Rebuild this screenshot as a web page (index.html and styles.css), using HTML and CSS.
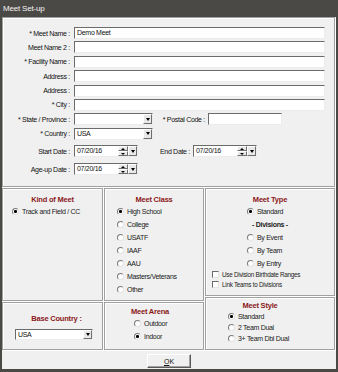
FILE: index.html
```html
<!DOCTYPE html>
<html lang="en">

<head>
  <meta charset="UTF-8" />
  <title>Meet Set-up</title>
  <link rel="stylesheet" href="styles.css">
</head>

<body>
  <div class="window">
    <div class="titlebar">Meet Set-up</div>

    <div class="client">
      <!-- general meet info -->
      <div class="panel setup">
        <div class="row">
          <span class="lbl">* Meet Name :</span>
          <span class="field wide">Demo Meet</span>
        </div>
        <div class="row">
          <span class="lbl">Meet Name 2 :</span>
          <span class="field wide"></span>
        </div>
        <div class="row">
          <span class="lbl">* Facility Name :</span>
          <span class="field wide"></span>
        </div>
        <div class="row">
          <span class="lbl">Address :</span>
          <span class="field wide"></span>
        </div>
        <div class="row">
          <span class="lbl">Address :</span>
          <span class="field wide"></span>
        </div>
        <div class="row">
          <span class="lbl">* City :</span>
          <span class="field wide"></span>
        </div>
        <div class="row">
          <span class="lbl">* State / Province :</span>
          <span class="field sel"><span class="val"></span><span class="btn drop"><i class="down"></i></span></span>
          <span class="lbl postal-lbl">* Postal Code :</span>
          <span class="field postal"></span>
        </div>
        <div class="row">
          <span class="lbl">* Country :</span>
          <span class="field sel"><span class="val">USA</span><span class="btn drop"><i class="down"></i></span></span>
        </div>
        <div class="row date-row">
          <span class="lbl">Start Date :</span>
          <span class="field date">
            <span class="val">07/20/16</span>
            <span class="spin"><span class="btn"><i class="up"></i></span><span class="btn"><i class="down"></i></span></span>
            <span class="btn drop"><i class="down"></i></span>
          </span>
          <span class="lbl postal-lbl">End Date :</span>
          <span class="field date">
            <span class="val">07/20/16</span>
            <span class="spin"><span class="btn"><i class="up"></i></span><span class="btn"><i class="down"></i></span></span>
            <span class="btn drop"><i class="down"></i></span>
          </span>
        </div>
        <div class="row date-row">
          <span class="lbl">Age-up Date :</span>
          <span class="field date">
            <span class="val">07/20/16</span>
            <span class="spin"><span class="btn"><i class="up"></i></span><span class="btn"><i class="down"></i></span></span>
            <span class="btn drop"><i class="down"></i></span>
          </span>
        </div>
      </div>

      <div class="lower">
        <div class="col c1">
          <div class="panel kind">
            <div class="head">Kind of Meet</div>
            <div class="opt"><span class="radio on"></span>Track and Field / CC</div>
          </div>
          <div class="panel base">
            <div class="head">Base Country :</div>
            <span class="field sel"><span class="val">USA</span><span class="btn drop"><i class="down"></i></span></span>
          </div>
        </div>

        <div class="col c2">
          <div class="panel klass">
            <div class="head">Meet Class</div>
            <div class="opt"><span class="radio on"></span>High School</div>
            <div class="opt"><span class="radio"></span>College</div>
            <div class="opt"><span class="radio"></span>USATF</div>
            <div class="opt"><span class="radio"></span>IAAF</div>
            <div class="opt"><span class="radio"></span>AAU</div>
            <div class="opt"><span class="radio"></span>Masters/Veterans</div>
            <div class="opt"><span class="radio"></span>Other</div>
          </div>
          <div class="panel arena">
            <div class="head">Meet Arena</div>
            <div class="opt"><span class="radio"></span>Outdoor</div>
            <div class="opt"><span class="radio on"></span>Indoor</div>
          </div>
        </div>

        <div class="col c3">
          <div class="panel type">
            <div class="head">Meet Type</div>
            <div class="opt"><span class="radio on"></span>Standard</div>
            <div class="sub">- Divisions -</div>
            <div class="opt"><span class="radio"></span>By Event</div>
            <div class="opt"><span class="radio"></span>By Team</div>
            <div class="opt"><span class="radio"></span>By Entry</div>
            <div class="check-row first"><span class="check"></span>Use Division Birthdate Ranges</div>
            <div class="check-row"><span class="check"></span>Link Teams to Divisions</div>
          </div>
          <div class="panel mstyle">
            <div class="head">Meet Style</div>
            <div class="opt"><span class="radio on"></span>Standard</div>
            <div class="opt"><span class="radio"></span>2 Team Dual</div>
            <div class="opt"><span class="radio"></span>3+ Team Dbl Dual</div>
          </div>
        </div>
      </div>

      <div class="footer">
        <button class="ok"><u>O</u>K</button>
      </div>
    </div>
  </div>
</body>

</html>
```

FILE: styles.css
```css
* {
  margin: 0;
  padding: 0;
  box-sizing: border-box;
}

html,
body {
  width: 338px;
  height: 372px;
  overflow: hidden;
}

body {
  background: #f0f0f0;
  font-family: "Liberation Sans", Arial, sans-serif;
  font-size: 7px;
  letter-spacing: -0.3px;
  color: #111;
}

.window {
  width: 338px;
  height: 372px;
  display: flex;
  flex-direction: column;
  background: #4b4946;
}

.titlebar {
  height: 17px;
  line-height: 17px;
  padding-left: 3px;
  color: #f4f4f4;
  font-size: 8px;
  letter-spacing: -0.2px;
}

.client {
  flex: 1;
  margin: 0 2px 3px 2px;
  background: #f0f0f0;
  display: flex;
  flex-direction: column;
}

/* etched frame */
.panel {
  border: 1px solid #a0a0a0;
  box-shadow: inset 1px 1px #fff, 1px 1px #fff;
}

.setup {
  width: 333px;
  height: 170px;
  margin-bottom: 1px;
  padding-top: 9px;
}

.row {
  display: flex;
  align-items: center;
  height: 12px;
  margin-bottom: 2.4px;
}

.row.date-row {
  margin-top: 5.7px;
}

.lbl {
  width: 67px;
  margin-right: 4px;
  text-align: right;
  white-space: nowrap;
}

.postal-lbl {
  width: 51px;
  margin: 0 3px 0 1px;
}

.field {
  display: flex;
  align-items: center;
  height: 12px;
  line-height: 10px;
  padding-left: 2px;
  background: #fff;
  border: 1px solid;
  border-color: #6b6b6b #ececec #ececec #6b6b6b;
  white-space: nowrap;
}

.wide {
  width: 251px;
}

.sel {
  width: 79px;
}

.postal {
  width: 74px;
}

.val {
  flex: 1;
}

.date {
  width: 64px;
}

/* small windows style buttons */
.btn {
  display: flex;
  align-items: center;
  justify-content: center;
  background: #e8e8e8;
  border: 1px solid;
  border-color: #fff #6f6f6f #6f6f6f #fff;
}

.drop {
  width: 9px;
  height: 10px;
}

.spin {
  display: flex;
  flex-direction: column;
  width: 10px;
  height: 10px;
}

.spin .btn {
  height: 5px;
}

.down,
.up {
  display: block;
  width: 0;
  height: 0;
  border-left: 2.5px solid transparent;
  border-right: 2.5px solid transparent;
}

.down {
  border-top: 3px solid #000;
}

.spin .down {
  border-top-width: 2px;
}

.up {
  border-bottom: 2px solid #000;
}

/* lower group boxes */
.lower {
  display: flex;
  gap: 1px;
  height: 163px;
}

.col {
  display: flex;
  flex-direction: column;
  gap: 1px;
}

.c1 {
  width: 101px;
}

.c2 {
  width: 100px;
}

.c3 {
  width: 130px;
}

.head {
  height: 10px;
  line-height: 10px;
  text-align: center;
  font-weight: bold;
  font-size: 7.5px;
  letter-spacing: -0.2px;
  color: #8b1a1a;
  white-space: nowrap;
}

.opt {
  display: flex;
  align-items: center;
  height: 13px;
  white-space: nowrap;
  color: #1a1a1a;
}

.radio {
  flex: none;
  width: 7px;
  height: 7px;
  margin-right: 3px;
  border-radius: 50%;
  background: #fff;
  border: 1px solid;
  border-color: #7a7a7a #e4e4e4 #e4e4e4 #7a7a7a;
}

.radio.on {
  background: radial-gradient(circle, #000 1.3px, #fff 1.7px);
}

.kind {
  height: 113px;
  padding: 6px 0 0 9px;
}

.kind .head {
  margin-left: -9px;
}

.base {
  height: 48px;
  padding: 11px 0 0 12px;
}

.base .head {
  margin-left: -4px;
}

.base .sel {
  width: 78px;
  height: 11px;
  margin-top: 5px;
}

.base .drop {
  height: 9px;
}

.klass {
  height: 113px;
  padding: 6px 0 0 12px;
}

.klass .head {
  margin-left: -12px;
}

.arena {
  height: 48px;
  padding: 4px 0 0 29px;
}

.arena .head {
  margin-left: -29px;
  padding-right: 8px;
}

.type {
  height: 108px;
  padding-top: 6px;
}

.type .opt {
  padding-left: 41px;
}

.sub {
  height: 13px;
  line-height: 13px;
  text-align: center;
  font-weight: bold;
  color: #222;
}

.check-row {
  display: flex;
  align-items: center;
  height: 10px;
  padding-left: 6px;
  font-size: 6.3px;
  letter-spacing: -0.25px;
  white-space: nowrap;
  color: #1a1a1a;
}

.check-row.first {
  margin-top: -1px;
}

.check {
  flex: none;
  width: 7px;
  height: 7px;
  margin-right: 3px;
  background: #fff;
  border: 1px solid;
  border-color: #6b6b6b #e4e4e4 #e4e4e4 #6b6b6b;
}

.mstyle {
  height: 53px;
  padding-top: 3px;
}

.mstyle .head {
  padding-right: 20px;
}

.mstyle .opt {
  height: 11px;
  padding-left: 22px;
}

.footer {
  flex: 1;
  display: flex;
  justify-content: center;
  padding-top: 3px;
}

.ok {
  width: 44px;
  height: 14px;
  font: inherit;
  letter-spacing: 0;
  color: #111;
  background: #f0f0f0;
  border: 1px solid;
  border-color: #fff #5a5a5a #5a5a5a #fff;
  box-shadow: inset -1px -1px #a0a0a0;
}
```
